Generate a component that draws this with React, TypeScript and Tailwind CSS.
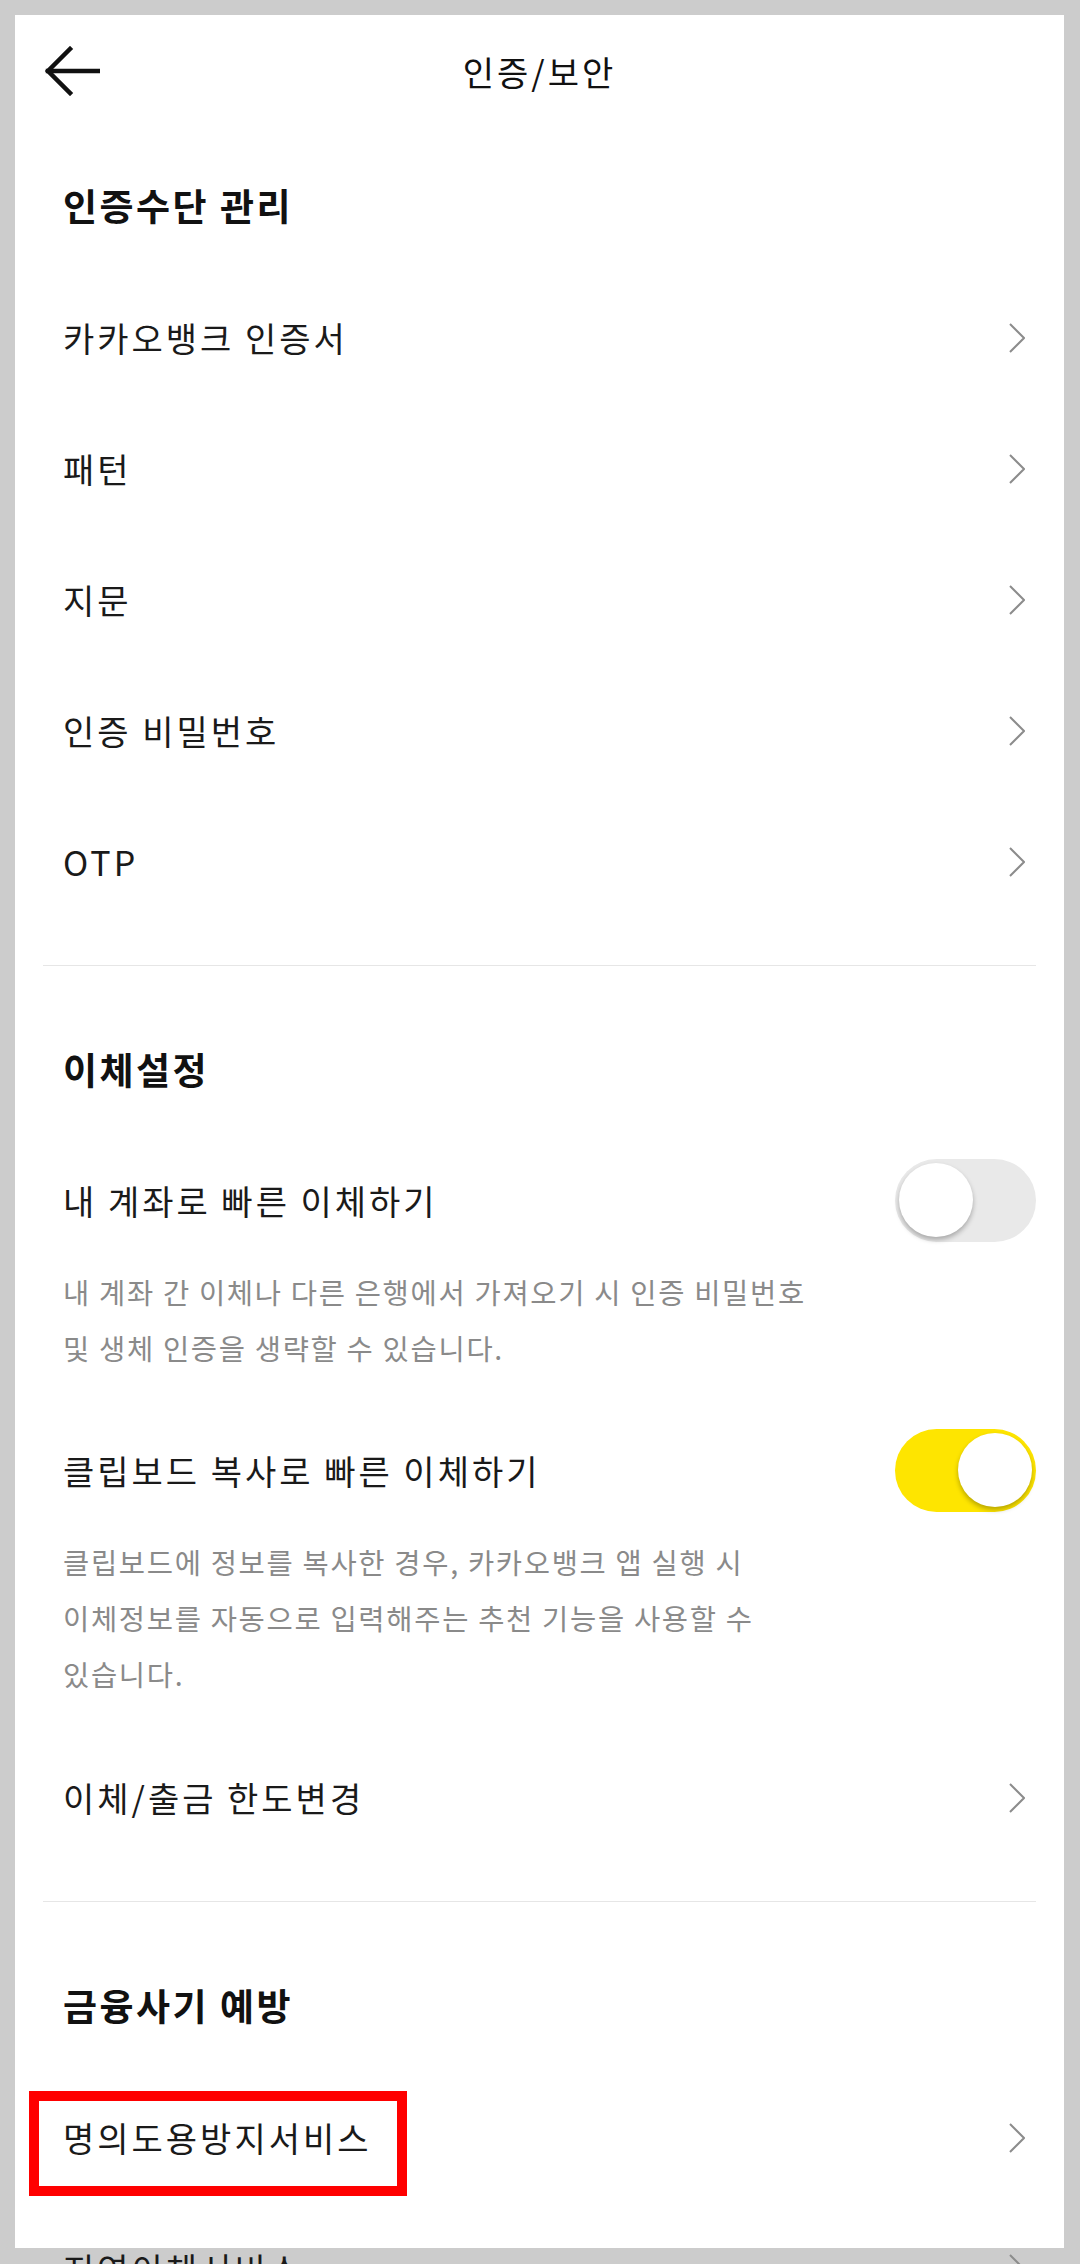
const FONT = "font-['Noto_Sans_CJK_KR','Noto_Sans',sans-serif]"

function BackArrow() {
  return (
    <svg width="56" height="50" viewBox="0 0 56 50" fill="none" stroke="#111" strokeWidth="4.5" strokeLinecap="square">
      <path d="M4 25 H54" />
      <path d="M26 3 L4 25 L26 47" strokeLinejoin="miter" />
    </svg>
  )
}

function Chevron() {
  return (
    <svg width="16" height="30" viewBox="0 0 16 30" fill="none" stroke="#8c8c8c" strokeWidth="2">
      <path d="M1 1 L15 15 L1 29" />
    </svg>
  )
}

function Toggle({ on }: { on: boolean }) {
  return (
    <div
      className={`flex h-[83px] w-[141px] shrink-0 items-center rounded-full px-[4px] ${
        on ? 'justify-end bg-[#fee500]' : 'justify-start bg-[#e9e9e9]'
      }`}
    >
      <div className="h-[74px] w-[74px] rounded-full bg-white shadow-[0_3px_5px_rgba(0,0,0,0.28)]" />
    </div>
  )
}

function LinkRow({ label }: { label: string }) {
  return (
    <div className="flex h-[131px] items-center justify-between pl-[20px] pr-[11px]">
      <span className="text-[34px] tracking-[3px] text-[#1a1a1a]">{label}</span>
      <Chevron />
    </div>
  )
}

function SectionTitle({ title }: { title: string }) {
  return (
    <div className="flex h-[132px] items-center pl-[20px]">
      <span className="text-[37px] font-bold tracking-[2.5px] text-[#111]">{title}</span>
    </div>
  )
}

function ToggleBlock({ label, on, lines }: { label: string; on: boolean; lines: string[] }) {
  return (
    <div className="pb-[30px]">
      <div className="flex h-[128px] items-center justify-between pl-[20px]">
        <span className="text-[34px] tracking-[3px] text-[#1a1a1a]">{label}</span>
        <Toggle on={on} />
      </div>
      <p className="pl-[20px] text-[28.5px] leading-[56px] tracking-[1.7px] text-[#8a8a8a]">
        {lines.map((l, i) => (
          <span key={i} className="block whitespace-nowrap">
            {l}
          </span>
        ))}
      </p>
    </div>
  )
}

function Divider() {
  return <div className="my-[38px] h-px bg-[#e6e6e6]" />
}

export default function App() {
  return (
    <div className={`h-[2264px] overflow-hidden bg-[#cccccc] pl-[15px] pr-[16px] pt-[15px] ${FONT}`}>
      <div className="h-[2233px] bg-white">
        <header className="relative flex h-[112px] items-center justify-center">
          <div className="absolute left-[29px] top-[31px]">
            <BackArrow />
          </div>
          <h1 className="text-[34px] tracking-[3px] text-[#111]">인증/보안</h1>
        </header>

        <div className="px-[28px] pt-[13px]">
          <SectionTitle title="인증수단 관리" />
          <LinkRow label="카카오뱅크 인증서" />
          <LinkRow label="패턴" />
          <LinkRow label="지문" />
          <LinkRow label="인증 비밀번호" />
          <LinkRow label="OTP" />

          <Divider />

          <SectionTitle title="이체설정" />
          <ToggleBlock
            label="내 계좌로 빠른 이체하기"
            on={false}
            lines={['내 계좌 간 이체나 다른 은행에서 가져오기 시 인증 비밀번호', '및 생체 인증을 생략할 수 있습니다.']}
          />
          <ToggleBlock
            label="클립보드 복사로 빠른 이체하기"
            on={true}
            lines={[
              '클립보드에 정보를 복사한 경우, 카카오뱅크 앱 실행 시',
              '이체정보를 자동으로 입력해주는 추천 기능을 사용할 수',
              '있습니다.',
            ]}
          />
          <LinkRow label="이체/출금 한도변경" />

          <Divider />

          <SectionTitle title="금융사기 예방" />
          <div className="relative">
            <LinkRow label="명의도용방지서비스" />
            <div className="absolute left-[-14px] top-[19px] h-[105px] w-[378px] border-[10px] border-[#ff0000]" />
          </div>
          <LinkRow label="지연이체서비스" />
        </div>
      </div>
    </div>
  )
}
